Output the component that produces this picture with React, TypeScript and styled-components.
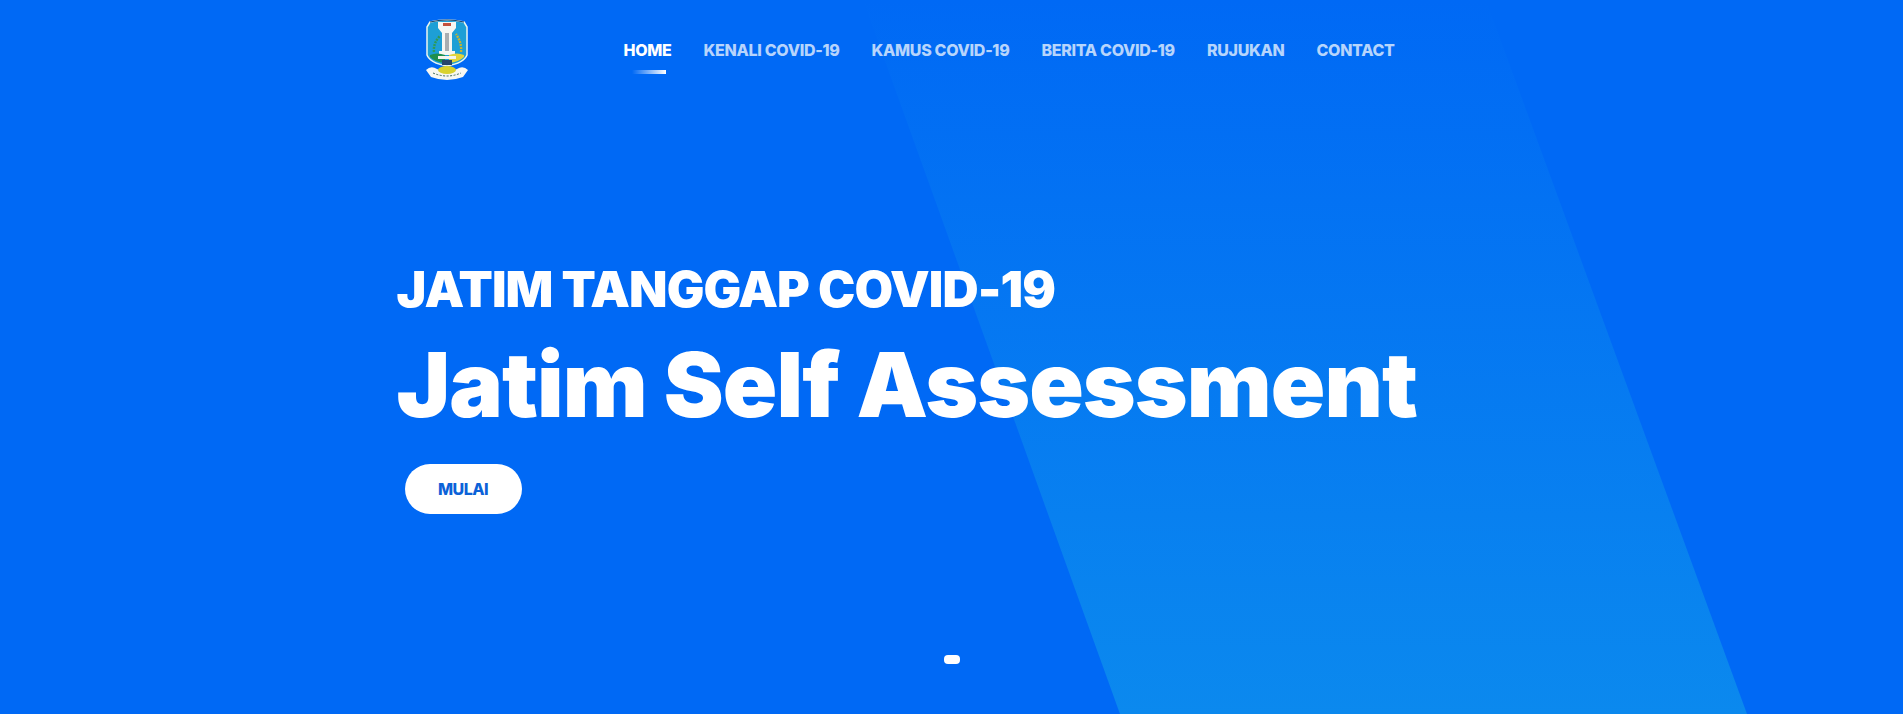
import React from "react";
import styled, { createGlobalStyle } from "styled-components";

const GlobalStyle = createGlobalStyle`
  html, body { margin: 0; padding: 0; height: 100%; overflow: hidden; }
  body { font-family: "Inter", "Liberation Sans", sans-serif; }
`;

const Hero = styled.div`
  position: relative;
  width: 100%;
  height: 714px;
  overflow: hidden;
  background: #0069f5;
`;

const Band = styled.div`
  position: absolute;
  inset: 0;
  background: linear-gradient(to bottom, #0069f5 0%, #0b89ee 100%);
  clip-path: polygon(863px 0px, 1486px 0px, 1747px 714px, 1120px 714px);
`;

const Container = styled.div`
  position: relative;
  box-sizing: border-box;
  width: 1140px;
  margin: 0 auto;
  padding: 0 15px;
`;

const Nav = styled.nav`
  display: flex;
  align-items: flex-start;
  height: 100px;
  padding-left: 28px;
`;

const LogoBox = styled.div`
  width: 199px;
  padding-top: 19px;
`;

const Menu = styled.ul`
  display: flex;
  gap: 32px;
  list-style: none;
  margin: 0;
  padding: 41px 0 0;
`;

const MenuItem = styled.li<{ $active?: boolean }>`
  position: relative;
  font-size: 16px;
  line-height: 19px;
  font-weight: 800;
  letter-spacing: -0.3px;
  color: ${(p) => (p.$active ? "#ffffff" : "rgba(255, 255, 255, 0.72)")};
  white-space: nowrap;
`;

const Underline = styled.span`
  position: absolute;
  left: 8px;
  top: 29px;
  width: 34px;
  height: 4px;
  background: linear-gradient(to right, rgba(255, 255, 255, 0), #ffffff);
`;

const Content = styled.div`
  padding-top: 159px;
`;

const Kicker = styled.h3`
  margin: 0;
  font-size: 50px;
  line-height: 60px;
  font-weight: 900;
  letter-spacing: -0.93px;
  color: #ffffff;
`;

const Title = styled.h1`
  margin: 12px 0 0;
  font-size: 90px;
  line-height: 108px;
  font-weight: 900;
  letter-spacing: -0.9px;
  color: #ffffff;
`;

const StartButton = styled.a`
  display: flex;
  align-items: center;
  justify-content: center;
  width: 117px;
  height: 50px;
  margin: 25px 0 0 8px;
  border-radius: 25px;
  background: #ffffff;
  color: #0b62d8;
  font-size: 16px;
  font-weight: 800;
  letter-spacing: -0.5px;
`;

const Dot = styled.div`
  position: absolute;
  left: 944px;
  top: 655px;
  width: 16px;
  height: 9px;
  border-radius: 4px;
  background: #ffffff;
`;

const Logo = () => (
  <svg width="44" height="62" viewBox="0 0 44 62" style={{ display: "block" }}>
    <path d="M5 3 Q22 -1 39 3 L42 8 V36 Q39 44 22 47 Q5 44 2 36 V8 Z" fill="#1d9fd6" stroke="#eaf5ef" strokeWidth="1.5" />
    <path d="M5 3 Q22 -1 39 3" fill="none" stroke="#17456f" strokeWidth="1.2" />
    <path d="M13 3 H31 V9 L27 14 V33 H17 V14 L13 9 Z" fill="#f6f6f2" />
    <rect x="18" y="4" width="8" height="3" fill="#c4503a" />
    <rect x="20" y="14" width="4" height="19" fill="#a9adb0" />
    <rect x="14" y="32" width="16" height="4" fill="#f6f6f2" />
    <path d="M9 33 Q8 24 15 17" fill="none" stroke="#2f9a55" strokeWidth="2.4" strokeDasharray="2 1" />
    <path d="M36 33 Q37 24 31 15" fill="none" stroke="#c9b52c" strokeWidth="2.4" strokeDasharray="2 1" />
    <path d="M5 36 Q12 33 20 36 V44 Q10 43 5 38 Z" fill="#1f8f4d" />
    <path d="M24 36 Q32 33 39 36 V38 Q34 43 24 44 Z" fill="#e2d43c" />
    <rect x="13" y="37" width="18" height="3" fill="#f4f4ee" />
    <rect x="17" y="41" width="10" height="5" fill="#26466b" />
    <path d="M1 51 Q6 46 12 50 Q22 55 32 50 Q38 46 43 51 L38 58 Q22 64 6 58 Z" fill="#f7f7f2" />
    <ellipse cx="22" cy="51" rx="9" ry="4" fill="#d9d22e" />
    <path d="M8 54 Q22 60 36 54" fill="none" stroke="#3c6a58" strokeWidth="1" strokeDasharray="2 1.5" />
  </svg>
);

const items = ["KENALI COVID-19", "KAMUS COVID-19", "BERITA COVID-19", "RUJUKAN", "CONTACT"];

export default function App() {
  return (
    <Hero>
      <GlobalStyle />
      <Band />
      <Container>
        <Nav>
          <LogoBox>
            <Logo />
          </LogoBox>
          <Menu>
            <MenuItem $active>
              HOME
              <Underline />
            </MenuItem>
            {items.map((item) => (
              <MenuItem key={item}>{item}</MenuItem>
            ))}
          </Menu>
        </Nav>
        <Content>
          <Kicker>JATIM TANGGAP COVID-19</Kicker>
          <Title>Jatim Self Assessment</Title>
          <StartButton>MULAI</StartButton>
        </Content>
      </Container>
      <Dot />
    </Hero>
  );
}
